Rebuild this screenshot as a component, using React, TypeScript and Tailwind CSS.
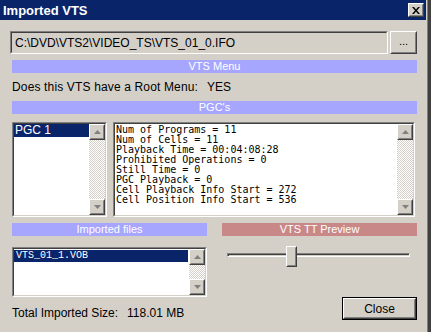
import React from "react";

const ui = { fontFamily: '"Liberation Sans", Arial, sans-serif' };
const mono = { fontFamily: '"DejaVu Sans Mono", "Liberation Mono", monospace' };
const mono2 = { fontFamily: '"Liberation Mono", "DejaVu Sans Mono", monospace' };

function Raised({ className = "", children }: { className?: string; children?: React.ReactNode }) {
  return (
    <div className={"border border-t-white border-l-white border-b-[#404040] border-r-[#404040] bg-[#d4d0c8] " + className}>
      <div className="w-full h-full border border-t-[#d4d0c8] border-l-[#d4d0c8] border-b-[#808080] border-r-[#808080] flex items-center justify-center">
        {children}
      </div>
    </div>
  );
}

function Sunken({ className = "", inner = "", children }: { className?: string; inner?: string; children?: React.ReactNode }) {
  return (
    <div className={"border border-t-[#808080] border-l-[#808080] border-b-white border-r-white " + className}>
      <div className={"w-full h-full border border-t-[#404040] border-l-[#404040] border-b-[#d4d0c8] border-r-[#d4d0c8] " + inner}>
        {children}
      </div>
    </div>
  );
}

function Arrow({ up }: { up: boolean }) {
  return (
    <Raised className="w-[16px] h-[16px] shrink-0">
      <svg width="7" height="4" viewBox="0 0 7 4">
        {up ? <polygon points="3.5,0 7,4 0,4" fill="#808080" /> : <polygon points="0,0 7,0 3.5,4" fill="#808080" />}
      </svg>
    </Raised>
  );
}

function ScrollBar() {
  return (
    <div className="w-[16px] h-full flex flex-col shrink-0">
      <Arrow up />
      <div className="flex-1 bg-[image:repeating-conic-gradient(#d4d0c8_0_25%,#ffffff_0_50%)] bg-[length:2px_2px]" />
      <Arrow up={false} />
    </div>
  );
}

function Header({ label, color }: { label: string; color: string }) {
  return (
    <div className={"h-[13px] flex items-center justify-center text-white text-[11px] leading-none " + color} style={ui}>
      {label}
    </div>
  );
}

const info = [
  "Num of Programs = 11",
  "Num of Cells = 11",
  "Playback Time = 00:04:08:28",
  "Prohibited Operations = 0",
  "Still Time = 0",
  "PGC Playback = 0",
  "Cell Playback Info Start = 272",
  "Cell Position Info Start = 536",
];

export default function App() {
  return (
    <div className="w-[431px] h-[332px] bg-[#d4d0c8] flex overflow-hidden" style={ui}>
      <div className="w-[426px] flex flex-col">
        {/* title bar */}
        <div className="h-[20px] bg-[#0a246a] flex items-center justify-between pl-[3px] pr-[2px]">
          <span className="text-white font-bold text-[13px] leading-none" style={ui}>Imported VTS</span>
          <Raised className="w-[16px] h-[14px]">
            <svg width="8" height="7" viewBox="0 0 8 7">
              <path d="M0 0 L2 0 L4 2.5 L6 0 L8 0 L5 3.5 L8 7 L6 7 L4 4.5 L2 7 L0 7 L3 3.5 Z" fill="#000" />
            </svg>
          </Raised>
        </div>

        {/* path row */}
        <div className="flex mt-[11px] ml-[10px] gap-[2px]">
          <Sunken className="w-[378px] h-[23px]" inner="bg-[#d4d0c8] flex items-center pl-[3px]">
            <span className="text-[12px] text-black leading-none">C:\DVD\VTS2\VIDEO_TS\VTS_01_0.IFO</span>
          </Sunken>
          <Raised className="w-[27px] h-[23px]">
            <span className="text-[11px] leading-none -mt-[2px]">...</span>
          </Raised>
        </div>

        <div className="ml-[12px] w-[405px] flex flex-col">
          <div className="mt-[6px]">
            <Header label="VTS Menu" color="bg-[#a6a6ff]" />
          </div>
          <div className="h-[28px] flex items-center text-[12px] text-black">
            <span className="tracking-[0.15px]">Does this VTS have a Root Menu:</span>
            <span className="ml-[9px]">YES</span>
          </div>
          <Header label="PGC's" color="bg-[#a6a6ff]" />

          {/* PGC lists */}
          <div className="flex mt-[8px] gap-[6px]">
            <Sunken className="w-[95px] h-[95px]" inner="bg-white flex">
              <div className="flex-1">
                <div className="bg-[#0a246a] text-white text-[12px] h-[13px] leading-[13px] pl-[1px]">PGC 1</div>
              </div>
              <ScrollBar />
            </Sunken>
            <Sunken className="w-[302px] h-[95px]" inner="bg-white flex">
              <div className="flex-1 pl-[1px] pt-[1px] text-[10px] leading-[10px] text-black whitespace-pre" style={mono}>
                {info.map((l) => (
                  <div key={l}>{l}</div>
                ))}
              </div>
              <ScrollBar />
            </Sunken>
          </div>

          {/* bottom area */}
          <div className="grid grid-cols-[195px_195px] gap-x-[15px] mt-[6px]">
            <div className="flex flex-col">
              <Header label="Imported files" color="bg-[#a6a6ff]" />
              <Sunken className="w-[195px] h-[50px] mt-[11px]" inner="bg-white flex">
                <div className="flex-1 pt-[1px]">
                  <div className="bg-[#0a246a] text-white text-[10px] h-[12px] leading-[12px] pl-[2px] mr-[1px]" style={mono2}>
                    VTS_01_1.VOB
                  </div>
                </div>
                <ScrollBar />
              </Sunken>
              <div className="h-[32px] flex items-center text-[12px] text-black">
                <span>Total Imported Size:</span>
                <span className="ml-[9px]">118.01 MB</span>
              </div>
            </div>
            <div className="flex flex-col">
              <Header label="VTS TT Preview" color="bg-[#c98888]" />
              <div className="relative h-[22px] mt-[10px] ml-[5px] w-[183px]">
                <div className="absolute left-0 right-0 top-[7px] h-[4px] border border-t-[#808080] border-l-[#808080] border-b-white border-r-white">
                  <div className="w-full h-full border-t border-l border-t-[#404040] border-l-[#404040]" />
                </div>
                <Raised className="absolute left-[59px] top-0 w-[11px] h-[21px]" />
              </div>
              <div className="flex justify-end mt-[29px]">
                <div className="w-[75px] h-[23px] border border-black">
                  <Raised className="w-full h-full">
                    <span className="text-[12px] text-black leading-none">Close</span>
                  </Raised>
                </div>
              </div>
            </div>
          </div>
        </div>
      </div>
      <div className="flex-1 flex">
        <div className="w-[1px] bg-[#d4d0c8]" />
        <div className="w-[1px] bg-[#808080]" />
        <div className="flex-1 bg-[#404040]" />
      </div>
    </div>
  );
}
